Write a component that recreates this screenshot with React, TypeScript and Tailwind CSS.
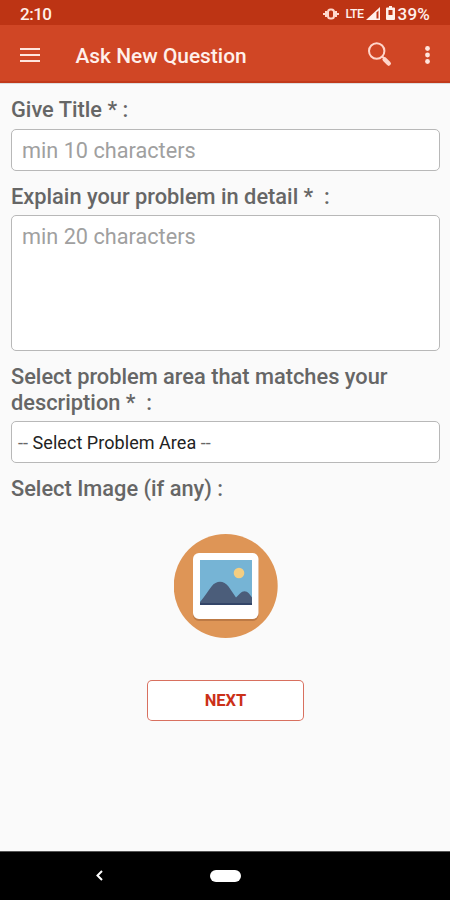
import type { ReactNode } from 'react';

function StatusBar() {
  return (
    <div className="flex h-[25px] shrink-0 items-center bg-[#bd3414] pl-5 pr-5 text-[#fff0eb]">
      <span className="mt-[3px] text-[17px] font-medium leading-5 tracking-[-0.5px]">2:10</span>
      <div className="ml-auto flex items-center">
        <svg className="mt-[2px] h-[12px] w-[16px]" viewBox="0 0 16 12" fill="none" stroke="#ffd9ce">
          <rect x="5" y="1.5" width="6" height="9" rx="2.5" strokeWidth="2" />
          <path d="M3 3v6M13 3v6M1 5v2M15 5v2" strokeWidth="2" />
        </svg>
        <span className="ml-[6px] mt-[2px] text-[12.5px] font-medium leading-4 tracking-[-0.6px]">LTE</span>
        <svg className="ml-[2px] mt-[1px] h-[13px] w-[14px]" viewBox="0 0 14 13">
          <path d="M0 13 14 0v13Z" fill="#fff0eb" />
          <path d="M10.5 5.500v6h2v-8Z" fill="#bd3414" />
        </svg>
        <svg className="ml-[6px] mt-[1px] h-[14px] w-[9px]" viewBox="0 0 9 14">
          <path d="M3 0h3v1.500h2q1 0 1 1V13q0 1-1 1H1q-1 0-1-1V2.500q0-1 1-1h2Z" fill="#fff0eb" />
          <path d="M2.500 4h4v5h-4Z" fill="#bd3414" />
        </svg>
        <span className="ml-[3px] mt-[3px] text-[17px] font-medium leading-5 tracking-[0.2px]">39%</span>
      </div>
    </div>
  );
}

function AppBar() {
  return (
    <header className="flex h-[58px] shrink-0 items-center border-b-2 border-[#c23a1b] bg-[#d04625] pl-5 pr-[20px] text-[#fff0eb]">
      <svg className="mt-[2px] h-[15px] w-5" viewBox="0 0 20 15" stroke="#ffe5dd" strokeWidth="2">
        <path d="M0 2h20M0 8h20M0 14h20" />
      </svg>
      <h1 className="ml-[35.5px] mt-[5px] text-[20.9px] font-medium leading-6">Ask New Question</h1>
      <svg className="ml-auto mt-[2px] h-[25px] w-6" viewBox="0 0 24 25" fill="none" stroke="#ffd5ca">
        <circle cx="8.700" cy="9" r="7.700" strokeWidth="2" />
        <path d="m14.200 14.500 3 3" strokeWidth="2" />
        <path d="m16.700 17.500 4 4" strokeWidth="4.500" strokeLinecap="round" />
      </svg>
      <svg className="ml-[33px] mt-[3px] h-[18px] w-[5px]" viewBox="0 0 5 18" fill="#ffe5dd">
        <circle cx="2.500" cy="2.500" r="2.400" />
        <circle cx="2.500" cy="9" r="2.400" />
        <circle cx="2.500" cy="15.500" r="2.400" />
      </svg>
    </header>
  );
}

function Label({ children }: { children: ReactNode }) {
  return (
    <div className="whitespace-pre text-[21.8px] font-medium leading-[26px] text-[#666]">{children}</div>
  );
}

function PictureIcon() {
  return (
    <svg className="h-[104px] w-[104px]" viewBox="0 0 104 104">
      <circle cx="51.700" cy="52" r="52" fill="#de9556" />
      <rect x="19" y="21" width="65.500" height="66" rx="6" fill="#bd7a45" />
      <rect x="19" y="19" width="65.500" height="66" rx="6" fill="#fff" />
      <path d="M26 26h52v45H26Z" fill="#76b4d5" />
      <circle cx="65" cy="39" r="5.300" fill="#f4ce82" />
      <path d="M26 68C31 62 34 57 37.500 52.500c5-6.500 12.500-6 17 0L62 63.500l4-4c3-3 6-3 9 0l3 4V71H26Z" fill="#4b5d7a" />
      <path d="M26 69h52v2H26Z" fill="#334568" />
    </svg>
  );
}

function NavigationBar() {
  return (
    <div className="flex h-[49px] shrink-0 items-center border-t border-[#555] bg-black pb-px pl-[96px]">
      <svg className="h-[11px] w-[7px]" viewBox="0 0 7 11" fill="none" stroke="#fff" strokeWidth="2">
        <path d="M6 1 1.500 5.500 6 10" />
      </svg>
      <div className="ml-[107px] h-[12px] w-[31px] rounded-full bg-white" />
    </div>
  );
}

export default function App() {
  return (
    <div className="flex h-[900px] w-[450px] flex-col overflow-hidden bg-[#fafafa] font-['Roboto',sans-serif]">
      <StatusBar />
      <AppBar />
      <main className="flex flex-1 flex-col border-t border-[#dedede] pl-[11px] pr-[10px] pt-[13px]">
        <Label>Give Title * :</Label>
        <div className="mt-[6px] h-[42px] rounded-[5px] border border-[#b8b8b8] bg-white px-[10px] pt-[8px] text-[21.7px] leading-[26px] text-[#a0a0a0]">
          min 10 characters
        </div>
        <div className="mt-[13px]">
          <Label>{'Explain your problem in detail *  :'}</Label>
        </div>
        <div className="mt-[5px] h-[136px] rounded-[5px] border border-[#b8b8b8] bg-white px-[10px] pt-[8px] text-[21.7px] leading-[26px] text-[#a0a0a0]">
          min 20 characters
        </div>
        <div className="mt-[13px]">
          <Label>{'Select problem area that matches your\ndescription *  :'}</Label>
        </div>
        <div className="mt-[5px] flex h-[42px] items-center whitespace-pre rounded-[5px] border border-[#b8b8b8] bg-white px-[6px] pt-[1px] text-[18px] tracking-[0.05px] text-[#222]">
          <span className="text-[#666]">--</span> Select Problem Area <span className="text-[#666]">--</span>
        </div>
        <div className="mt-[13px]">
          <Label>Select Image (if any) :</Label>
        </div>
        <div className="mt-[32px] flex justify-center">
          <PictureIcon />
        </div>
        <button className="mt-[42px] h-[41px] w-[157px] self-center rounded-[5px] bg-white pt-[2px] text-[16.5px] font-bold text-[#cb3018] inset-ring inset-ring-[#d8705f]">
          NEXT
        </button>
      </main>
      <NavigationBar />
    </div>
  );
}
